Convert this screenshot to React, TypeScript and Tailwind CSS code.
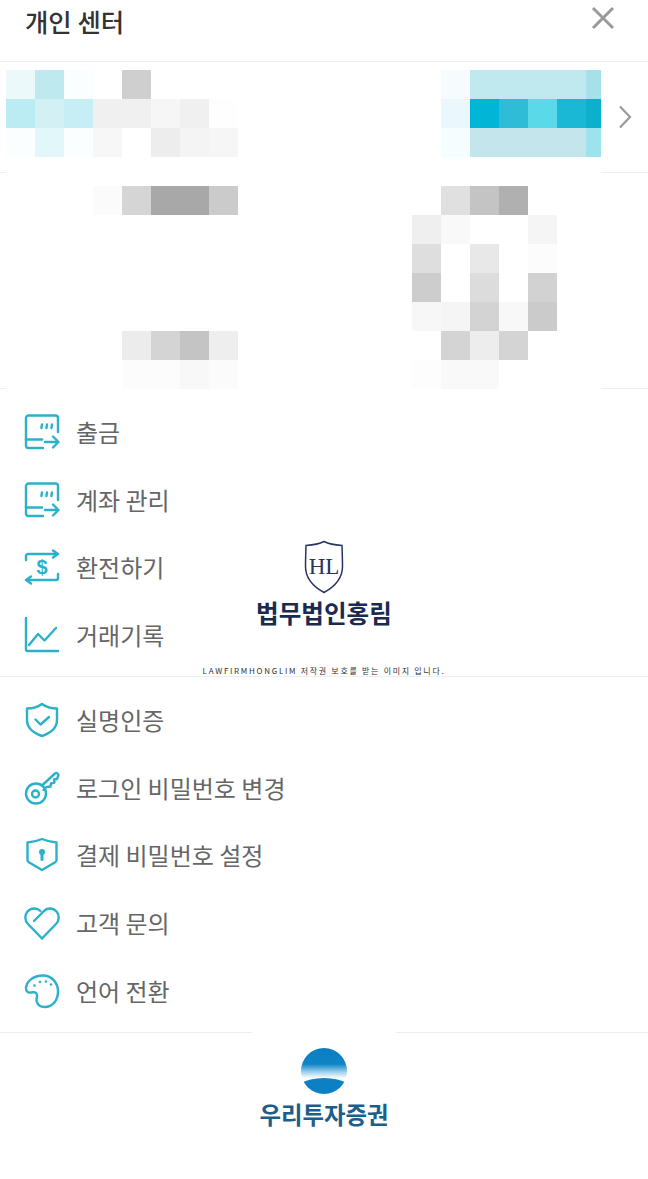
const KR = "font-['Noto_Sans_CJK_KR','Noto_Sans',sans-serif]";

// pixelated blocks covering the account info. each row is 29px high
const TOP_LEFT = [
  ["#ecf9fb", "#bde9ef", "#fbfeff", "#ffffff", "#cfcfcf", "#ffffff", "#ffffff", "#ffffff"],
  ["#bbebf3", "#d3f1f5", "#c8eef5", "#f0f0f0", "#f0f0f0", "#f6f6f6", "#f0f0f0", "#fefefe"],
  ["#fbfeff", "#e1f7fa", "#fbfeff", "#f7f7f7", "#ffffff", "#ededed", "#f4f4f4", "#f6f6f6"],
];
const TOP_RIGHT = [
  ["#f6fbfe", "#bfe9ef", "#bfe9ef", "#bfe9ef", "#bfe9ef", "#a6e0e8"],
  ["#eaf7fc", "#00b5d6", "#2fbcd6", "#5adae9", "#1bb8d6", "#0cb0cb"],
  ["#f6fdff", "#c4e5eb", "#c4e5eb", "#c4e5eb", "#c4e5eb", "#9de3ee"],
];
const MID_LEFT = [
  ["#fbfbfb", "#d5d5d5", "#a8a8a8", "#a8a8a8", "#cbcbcb"],
  ["#ffffff", "#ffffff", "#ffffff", "#ffffff", "#ffffff"],
  ["#ffffff", "#ffffff", "#ffffff", "#ffffff", "#ffffff"],
  ["#ffffff", "#ffffff", "#ffffff", "#ffffff", "#ffffff"],
  ["#ffffff", "#ffffff", "#ffffff", "#ffffff", "#ffffff"],
  ["#ffffff", "#ececec", "#d4d4d4", "#c4c4c4", "#eeeeee"],
  ["#ffffff", "#fcfcfc", "#fcfcfc", "#f8f8f8", "#fbfbfb"],
];
const MID_RIGHT = [
  ["#ffffff", "#e0e0e0", "#c4c4c4", "#b0b0b0", "#ffffff"],
  ["#efefef", "#f9f9f9", "#ffffff", "#ffffff", "#f5f5f5"],
  ["#dedede", "#ffffff", "#e8e8e8", "#ffffff", "#fcfcfc"],
  ["#cdcdcd", "#ffffff", "#dcdcdc", "#ffffff", "#d2d2d2"],
  ["#f7f7f7", "#f5f5f5", "#d3d3d3", "#f8f8f8", "#cbcbcb"],
  ["#ffffff", "#d4d4d4", "#ededed", "#d4d4d4", "#ffffff"],
  ["#fdfdfd", "#f9f9f9", "#f9f9f9", "#ffffff", "#ffffff"],
];

function Mosaic({ rows, narrowLast }: { rows: string[][]; narrowLast?: boolean }) {
  return (
    <div className="flex flex-col">
      {rows.map((row, i) => (
        <div key={i} className="flex h-[29px]">
          {row.map((c, j) => (
            <div
              key={j}
              className={narrowLast && j === row.length - 1 ? "w-[15px]" : "w-[29px]"}
              style={{ backgroundColor: c }}
            />
          ))}
        </div>
      ))}
    </div>
  );
}

const iconProps = {
  width: 36,
  height: 36,
  viewBox: "0 0 36 36",
  fill: "none",
  stroke: "#2bb1c9",
  strokeWidth: 2.4,
  strokeLinecap: "round" as const,
  strokeLinejoin: "round" as const,
};

function WithdrawIcon() {
  return (
    <svg {...iconProps}>
      <path d="M34 18V4a2.5 2.5 0 0 0-2.500-2.500H4.500A2.500 2.500 0 0 0 2 4v27.500A2.500 2.500 0 0 0 4.500 34H19" />
      <path d="M2 25.500h16" />
      <path d="M21 28h13M29 22.500l5.500 5.500-5.500 5.500" />
      <path d="M18 10.500l-.6 3.500M23 10.500l-.6 3.500M28 10.500l-.6 3.500" />
    </svg>
  );
}

function ExchangeIcon() {
  return (
    <svg {...iconProps}>
      <path d="M2 11V7a2 2 0 0 1 2-2h29M29 1.500L34 5l-5 3.500" />
      <path d="M34 25v4a2 2 0 0 1-2 2H3M7 27.500L2 31l5 3.500" />
      <text x="18" y="25" textAnchor="middle" fontSize="20" fontWeight="700" fill="#2bb1c9" stroke="none" fontFamily="'Liberation Sans',sans-serif">$</text>
    </svg>
  );
}

function ChartIcon() {
  return (
    <svg {...iconProps}>
      <path d="M2 1v31.500a1.500 1.500 0 0 0 1.500 1.500H34" />
      <path d="M5 28l9-11 6.500 6.500L32 11" />
    </svg>
  );
}

function ShieldCheckIcon() {
  return (
    <svg {...iconProps}>
      <path d="M18 2c4 3 9 4.500 15 4.500V18c0 8-6.500 13-15 16C9.500 31 3 26 3 18V6.500C9 6.500 14 5 18 2z" />
      <path d="M11.500 17.500l5 5 8.500-7.500" />
    </svg>
  );
}

function KeyIcon() {
  return (
    <svg {...iconProps}>
      <circle cx="12" cy="23.500" r="10" />
      <circle cx="11.500" cy="24" r="3.500" />
      <path d="M18 15.500L31 3.500c1.500-1 3.500 0 3.500 1.500L33 9l-3 .5.500 3-3.500 1-.5 3-4 .5-3 3" />
    </svg>
  );
}

function ShieldLockIcon() {
  return (
    <svg {...iconProps}>
      <path d="M18 3c4.500 2 9.500 3 14.500 3.500V24c0 1-.5 1.700-1.300 2.200L18 34 4.800 26.200C4 25.700 3.500 25 3.500 24V6.500C8.500 6 13.500 5 18 3z" transform="translate(0 -1)" />
      <circle cx="18" cy="15" r="3" fill="#2bb1c9" stroke="none" />
      <path d="M18 16v6.500" strokeWidth="3" />
    </svg>
  );
}

function HeartIcon() {
  return (
    <svg {...iconProps}>
      <path d="M18 33.500L4 19C.500 15.500.500 10 3.500 6.500 7 2.500 13 2.500 16.500 6" />
      <path d="M18 33.500L32 19c3.500-3.500 3.500-9 .500-12.500-3.500-4-9.500-4-13 0L10 16" />
    </svg>
  );
}

function PaletteIcon() {
  return (
    <svg {...iconProps}>
      <path d="M19 2.500C9.500 2.500 2 8.500 2 15.500c0 3.500 2.500 4.500 5 4 3-.6 5.500-.5 6 2.500.4 2.500-1 4-.3 6.500 1 3.500 4 5.500 8 5.500 8 0 13.300-7 13.300-15.500C34 9.500 27.500 2.500 19 2.500z" />
      <circle cx="10.500" cy="12.500" r="1.300" fill="#2bb1c9" stroke="none" />
      <circle cx="16" cy="9" r="1.300" fill="#2bb1c9" stroke="none" />
      <circle cx="22" cy="8.500" r="1.300" fill="#2bb1c9" stroke="none" />
      <circle cx="27" cy="11.500" r="1.300" fill="#2bb1c9" stroke="none" />
    </svg>
  );
}

function MenuRow({ icon, label }: { icon: React.ReactNode; label: string }) {
  return (
    <div className="flex h-[67.7px] items-center gap-[16px] pl-[24px]">
      {icon}
      <span className="text-[24px] leading-none text-[#666666]">{label}</span>
    </div>
  );
}

export default function App() {
  return (
    <div className={`relative h-[1179px] w-[648px] overflow-hidden bg-white ${KR}`}>
      {/* Header */}
      <div className="flex h-[62px] items-start justify-between border-b border-[#eeeeee] pl-[25px] pr-[33px]">
        <h1 className="mt-[4px] text-[25.400px] font-medium leading-[34px] text-[#333333]">개인 센터</h1>
        <svg width="24" height="24" viewBox="0 0 24 24" className="mt-[6px]" fill="none" stroke="#999999" strokeWidth="3">
          <path d="M2 2l20 20M22 2L2 22" />
        </svg>
      </div>

      {/* Account rows */}
      <div className="flex h-[111px] items-center justify-end border-b border-[#eeeeee] pr-[16px]">
        <svg width="14" height="24" viewBox="0 0 14 24" fill="none" stroke="#999999" strokeWidth="2.200">
          <path d="M2 1.500L12 12 2 22.500" />
        </svg>
      </div>
      <div className="h-[216px] border-b border-[#eeeeee]" />

      {/* Menu */}
      <div className="h-[288px] border-b border-[#eeeeee] pt-[9px]">
        <MenuRow icon={<WithdrawIcon />} label="출금" />
        <MenuRow icon={<WithdrawIcon />} label="계좌 관리" />
        <MenuRow icon={<ExchangeIcon />} label="환전하기" />
        <MenuRow icon={<ChartIcon />} label="거래기록" />
      </div>
      <div className="h-[356px] border-b border-[#eeeeee] pt-[9px]">
        <MenuRow icon={<ShieldCheckIcon />} label="실명인증" />
        <MenuRow icon={<KeyIcon />} label="로그인 비밀번호 변경" />
        <MenuRow icon={<ShieldLockIcon />} label="결제 비밀번호 설정" />
        <MenuRow icon={<HeartIcon />} label="고객 문의" />
        <MenuRow icon={<PaletteIcon />} label="언어 전환" />
      </div>

      {/* Mosaic censoring over the account rows */}
      <div className="absolute left-[6px] top-[70px] h-[319px] w-[595px] bg-white">
        <div className="flex justify-between">
          <Mosaic rows={TOP_LEFT} />
          <Mosaic rows={TOP_RIGHT} narrowLast />
        </div>
        <div className="mt-[29px] flex">
          <div className="ml-[87px]">
            <Mosaic rows={MID_LEFT} />
          </div>
          <div className="ml-[174px]">
            <Mosaic rows={MID_RIGHT} />
          </div>
        </div>
      </div>

      {/* Watermark */}
      <div className="absolute left-0 top-[540px] flex w-[648px] flex-col items-center">
        <svg width="40" height="54" viewBox="0 0 40 54" fill="none">
          <path d="M20 1.500c5 2.500 11 3.500 18 4 0 0 .5 15 .5 21C38.500 38 30 47 20 52.500 10 47 1.500 38 1.500 26.500c0-6 .5-21 .5-21 7-.5 13-1.500 18-4z" stroke="#28365f" strokeWidth="1.500" />
          <text x="20" y="34" textAnchor="middle" fontSize="23" fill="#28365f" fontFamily="'Liberation Serif',serif">HL</text>
        </svg>
        <div className="mt-[2px] text-[24.600px] font-bold leading-[32px] text-[#1a2a50]">법무법인홍림</div>
        <div className="mt-[37px] text-[8px] leading-[12px] tracking-[1.700px] text-[#333333]">LAWFIRMHONGLIM 저작권 보호를 받는 이미지 입니다.</div>
      </div>

      {/* Footer logo */}
      <div className="absolute left-[252px] top-[1032px] flex h-[110px] w-[144px] flex-col items-center bg-white pt-[16px]">
        <div className="relative h-[46px] w-[46px] overflow-hidden rounded-full bg-[linear-gradient(180deg,#0b7cc2_0%,#0f85c8_35%,#9cd0ea_52%,#ffffff_66%)]">
          <div className="absolute left-[-12px] top-[30px] h-[40px] w-[70px] rounded-[50%] bg-[#0b80c5]" />
        </div>
        <div className="mt-[4px] text-[23.400px] font-bold leading-[32px] text-[#1c5e8b]">우리투자증권</div>
      </div>
    </div>
  );
}
